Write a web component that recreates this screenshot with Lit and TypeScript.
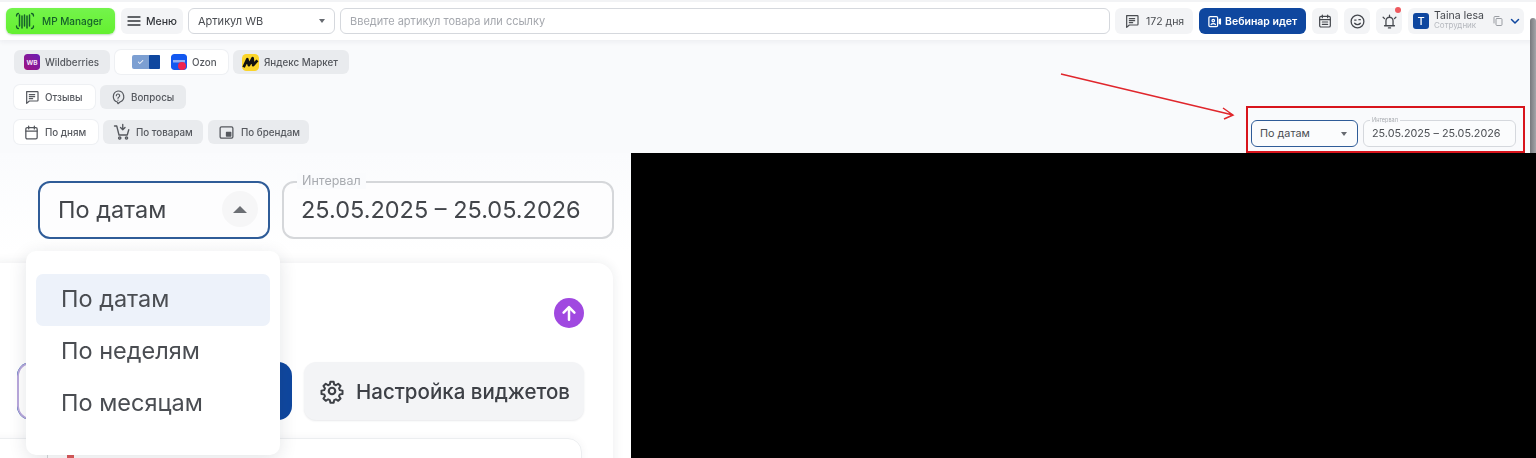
import { LitElement, html, css, svg } from "lit";
import { customElement } from "lit/decorators.js";

const ic = (w: number, body: unknown, sw = 1.8) => html`<svg width=${w} height=${w} viewBox="0 0 24 24" fill="none" stroke="currentColor" stroke-width=${sw} stroke-linecap="round" stroke-linejoin="round">${body}</svg>`;
const chat = svg`<path d="M4 4h16a1 1 0 0 1 1 1v12a1 1 0 0 1-1 1H8l-4 3.5V5a1 1 0 0 1 0-1z"/><path d="M8 8.5h8M8 11.5h8M8 14.5h5"/>`;
const cal = svg`<rect x="4" y="5" width="16" height="16" rx="2"/><path d="M4 10h16M8 3v4M16 3v4"/>`;

@customElement("app-root")
export class AppRoot extends LitElement {
  static styles = css`
    :host { display: block; width: 1536px; height: 458px; overflow: hidden; position: relative; background: #f9fafc; font-family: Inter, "Noto Sans", sans-serif; color: #3d4046; }
    * { box-sizing: border-box; }
    header, .top, .lower, .scroll { filter: blur(0.35px); }
    header { height: 40px; background: #fff; border-top: 2px solid #f2f3f5; box-shadow: 0 2px 5px rgba(30,40,60,.06); padding: 6px 12px 0 6px; display: flex; gap: 5px; position: relative; }
    .hb { height: 26px; border-radius: 6px; display: flex; align-items: center; flex: none; }
    .logo { width: 109px; background: linear-gradient(#74f44c, #64f02f); color: #145f2a; font-size: 10px; font-weight: 500; padding-left: 9px; gap: 7px; margin-right: 1px; box-shadow: 0 1px 2px rgba(40,120,40,.3); }
    .grey { background: #f3f4f6; }
    .menu { width: 62px; padding-left: 5px; gap: 4px; font-size: 10.5px; font-weight: 500; color: #33363b; }
    .sel { width: 147px; background: #fff; border: 1px solid #d5d8dd; padding: 0 9px; justify-content: space-between; font-size: 11px; color: #4a4d52; }
    .caret { width: 0; height: 0; border: 3.5px solid transparent; border-top: 4px solid #666a70; border-bottom: 0; }
    .search { flex: 1; background: #fff; border: 1px solid #d5d8dd; padding-left: 9px; font-size: 11px; color: #a5a8ae; }
    .days { width: 78px; padding-left: 9px; gap: 6px; font-size: 10.5px; color: #4a4d52; margin-right: 1px; }
    .web { width: 107px; background: #0f479f; color: #fff; font-size: 10.5px; font-weight: 600; padding-left: 8px; gap: 3px; margin-right: 1px; }
    .sq { width: 26px; justify-content: center; color: #44474d; margin-right: 1px; position: relative; }
    .dot { position: absolute; width: 6px; height: 6px; border-radius: 50%; background: #ee5a5f; top: -1px; right: 1px; }
    .user { width: 116px; padding-left: 5px; gap: 5px; }
    .ava { width: 16px; height: 16px; border-radius: 3px; background: #0f479f; color: #fff; font-size: 11px; font-weight: 500; display: flex; align-items: center; justify-content: center; flex: none; }
    .uname { display: flex; flex-direction: column; font-size: 10.5px; line-height: 11px; width: 53px; color: #44474d; white-space: nowrap; margin-top: -2px; }
    .uname small { font-size: 8px; line-height: 9px; color: #b5b8be; }
    .scroll { position: absolute; right: 0; top: 18px; width: 6px; height: 135px; background: linear-gradient(90deg, #77797d, #a3a5a9); border-radius: 3px 3px 0 0; }

    .top { height: 113px; display: flex; justify-content: space-between; align-items: flex-end; position: relative; }
    .rows { display: flex; flex-direction: column; gap: 11px; padding: 0 0 9px 14px; }
    .row { display: flex; gap: 5px; height: 24px; }
    .tab { display: flex; align-items: center; height: 24px; border-radius: 6px; background: #e9ebee; font-size: 9.8px; color: #55585e; font-weight: 500; padding-left: 10px; gap: 5px; white-space: nowrap; }
    .tab.on { background: #fff; box-shadow: 0 0 0 1px #eef0f3; }
    .toggle { width: 28px; height: 14px; border-radius: 2px; background: #7c9fd2; display: flex; justify-content: flex-end; color: #fff; font-size: 8px; position: relative; margin-left: 7px; margin-right: 6px; }
    .toggle i { width: 11px; height: 14px; background: #0f479f; border-radius: 1px; }
    .toggle b { position: absolute; left: 5px; top: 1px; font-weight: 400; line-height: 12px; }
    .logoIc { width: 16px; height: 16px; border-radius: 3px; flex: none; }

    .redbox { width: 279px; height: 47px; border: 2px solid #d8141c; margin-right: 11px; padding: 12px 7px 0 3px; display: flex; gap: 5px; }
    .f { height: 27px; border-radius: 6px; display: flex; align-items: center; font-size: 10.8px; color: #4a4d52; position: relative; background: #fbfcfd; }
    .f.a { width: 107px; border: 1px solid #2f5c98; padding: 0 10px 0 8px; justify-content: space-between; }
    .f.b { width: 153px; border: 1px solid #d5d8dd; padding-left: 8px; white-space: nowrap; }
    .f.b em { position: absolute; left: 6px; top: -5px; font-style: normal; font-size: 5.5px; line-height: 8px; background: #f9fafc; padding: 0 2px; color: #a8abb0; }
    .arrow { position: absolute; left: 1055px; top: 30px; }

    .lower { display: grid; grid-template-columns: 631px 1fr; height: 305px; }
    .black { background: #000; }
    .zoom { position: relative; overflow: hidden; background: linear-gradient(#fafbfd, #fff 100px); }
    .ctrls { display: flex; gap: 12px; padding: 28px 0 0 38px; }
    .F { height: 58px; border-radius: 12px; display: flex; align-items: center; font-size: 23.5px; color: #43464b; background: #fdfdfe; position: relative; white-space: nowrap; padding-bottom: 2px; }
    .F.a { width: 232px; border: 2px solid #2f5c98; padding-left: 18px; padding-right: 10px; justify-content: space-between; }
    .F.b { width: 332px; border: 2px solid #d5d7da; padding-left: 17px; }
    .F.b em { position: absolute; left: 13px; top: -10px; font-style: normal; font-size: 12.5px; line-height: 16px; background: #fafbfd; padding: 0 5px; color: #a8abb0; }
    .up { width: 36px; height: 36px; border-radius: 50%; background: #f6f6f7; display: flex; align-items: center; justify-content: center; }
    .up::before { content: ""; border: 7px solid transparent; border-bottom: 7px solid #6c6f74; border-top: 0; }
    .card { margin: 24px 0 0 -14px; width: 627px; height: 260px; background: #fff; border-radius: 16px; box-shadow: 0 0 12px rgba(30,40,60,.09); padding: 35px 29px 0 31px; }
    .pur { display: flex; justify-content: flex-end; }
    .pc { width: 30px; height: 30px; border-radius: 50%; background: #a049e0; color: #fff; display: flex; align-items: center; justify-content: center; }
    .btns { display: flex; gap: 12px; margin-top: 34px; }
    .b1 { width: 275px; height: 58px; border-radius: 14px; background: #0f479f; overflow: hidden; }
    .b1 i { display: block; width: 215px; height: 58px; background: #fff; border: 2px solid #b9a8dc; border-radius: 14px 0 0 14px; }
    .b2 { width: 280px; height: 58px; border-radius: 12px; background: #f3f4f6; display: flex; align-items: center; gap: 11px; padding-left: 15px; font-size: 20.5px; font-weight: 500; color: #3d4046; white-space: nowrap; box-shadow: 0 1px 2px rgba(30,40,60,.1); }
    .inner { margin: 18px 0 0 -31px; width: 596px; height: 60px; border-radius: 14px; border: 1px solid #eceef0; position: relative; box-shadow: 0 0 8px rgba(30,40,60,.05); }
    .mark { position: absolute; left: 80px; top: 13px; width: 7px; height: 14px; background: #dc5a5a; }
    .vline { position: absolute; left: 60px; top: 13px; width: 1px; height: 14px; background: #d5d7da; }
    .dd { position: absolute; left: 26px; top: 98px; width: 254px; height: 204px; background: #fff; border-radius: 10px; padding: 23px 10px 0; box-shadow: 0 4px 18px rgba(30,40,60,.12); }
    .it { height: 52px; border-radius: 7px; display: flex; align-items: center; padding: 0 0 3px 25px; font-size: 23.5px; color: #4a4d52; }
    .it.sel2 { background: #edf2fa; }
  `;

  render() {
    return html`
      <header>
        <div class="hb logo">
          <svg width="20" height="18" viewBox="0 0 20 18" fill="none" stroke="#145f2a" stroke-width="1.300" stroke-linecap="round"><path d="M3.500 1.500C2 1.500 1.500 2.500 1.500 4M16.500 1.500c1.500 0 2 1 2 2.500M3.500 16.500C2 16.500 1.500 15.500 1.500 14M16.500 16.500c1.500 0 2-1 2-2.500"/><path d="M4.500 3v11M7 4v12M9.500 3v11M12 4v12M14.500 3v11" stroke-width="1.500"/></svg>
          MP Manager
        </div>
        <div class="hb grey menu">${ic(16, svg`<path d="M3 6h18M3 12h18M3 18h18"/>`, 2)}Меню</div>
        <div class="hb sel">Артикул WB<span class="caret"></span></div>
        <div class="hb search">Введите артикул товара или ссылку</div>
        <div class="hb grey days">${ic(16, chat)}172 дня</div>
        <div class="hb web">
          ${ic(15, svg`<rect x="3" y="4" width="14" height="16" rx="2"/><circle cx="10" cy="10.5" r="2"/><path d="M6.5 17c.6-2 6.400-2 7 0M19.500 9l2-1v8l-2-1z"/>`, 2)}Вебинар идет
        </div>
        <div class="hb grey sq">${ic(16, svg`${cal}<path d="M8 13.500h8M8 17h8"/>`)}</div>
        <div class="hb grey sq">${ic(17, svg`<circle cx="12" cy="12" r="9"/><path d="M8 14.500c2 2.500 6 2.500 8 0M8 10h2M14 9.500h2"/>`)}</div>
        <div class="hb grey sq">${ic(17, svg`<path d="M7 18v-7a5 5 0 0 1 10 0v7M5 18h14M10.500 21h3M12 3v2M3 6l2 2M21 6l-2 2"/>`)}<span class="dot"></span></div>
        <div class="hb grey user">
          <span class="ava">T</span>
          <span class="uname">Taina Iesa<small>Сотрудник</small></span>
          <span style="color:#9a9da3;display:flex">${ic(12, svg`<rect x="8" y="7" width="12" height="14" rx="2"/><path d="M4 16V5a2 2 0 0 1 2-2h8"/>`, 2)}</span>
          <span style="color:#0f479f;display:flex">${ic(12, svg`<path d="M5 9l7 7 7-7"/>`, 3)}</span>
        </div>
      </header>
      <div class="scroll"></div>

      <section class="top">
        <div class="rows">
          <div class="row">
            <div class="tab" style="width:96px"><svg class="logoIc" viewBox="0 0 16 16"><defs><linearGradient id="wb" x1="0" y1="1" x2="1" y2="0"><stop offset="0" stop-color="#a1127f"/><stop offset="1" stop-color="#6a1fb5"/></linearGradient></defs><rect width="16" height="16" rx="3" fill="url(#wb)"/><text x="8" y="10.500" font-size="6.500" font-weight="700" fill="#f3e3f5" text-anchor="middle" font-family="Inter">WB</text></svg>Wildberries</div>
            <div class="tab on" style="width:113px"><span class="toggle"><b>✓</b><i></i></span><svg class="logoIc" viewBox="0 0 16 16"><rect width="16" height="16" rx="3" fill="#1358f0"/><rect x="2" y="6" width="12" height="2.500" fill="#8fb0f5"/><circle cx="11" cy="12" r="4" fill="#f0244f"/></svg>Ozon</div>
            <div class="tab" style="width:116px;padding-left:9px"><svg class="logoIc" style="width:17px;height:17px" viewBox="0 0 16 16"><rect width="16" height="16" rx="4" fill="#fbd52a"/><path d="M1.500 12.500L5 5l1.500 5.500L10 4l.5 6.500L14.500 6" fill="none" stroke="#111" stroke-width="2.600" stroke-linejoin="round"/></svg>Яндекс Маркет</div>
          </div>
          <div class="row">
            <div class="tab on" style="width:81px">${ic(16, chat)}Отзывы</div>
            <div class="tab" style="width:86px">${ic(16, svg`<path d="M12 3a8.500 8.500 0 0 1 3 16.500L12 22l-1-2.500A8.500 8.500 0 0 1 12 3z"/><path d="M9.500 10a2.500 2.500 0 1 1 3.500 2.300c-.7.400-1 .8-1 1.700M12 16.500v.2"/>`)}Вопросы</div>
          </div>
          <div class="row">
            <div class="tab on" style="width:84px;padding-left:9px">${ic(17, cal)}По дням</div>
            <div class="tab" style="width:100px">${ic(18, svg`<path d="M2 4h3l3 12h11l2-7M13 2v7M10 6l3 3 3-3"/><circle cx="9" cy="20" r="1.500"/><circle cx="18" cy="20" r="1.500"/>`)}По товарам</div>
            <div class="tab" style="width:101px;gap:6px">${ic(17, svg`<rect x="3" y="4" width="18" height="16" rx="2"/><rect x="12" y="12" width="6" height="5" fill="currentColor"/>`)}По брендам</div>
          </div>
        </div>
        <svg class="arrow" width="190" height="50" viewBox="0 0 190 50" fill="none" stroke="#e0262c" stroke-width="1.500"><path d="M6 4l172 41M168 38l10 7-9 4"/></svg>
        <div class="redbox">
          <div class="f a">По датам<span class="caret"></span></div>
          <div class="f b"><em>Интервал</em>25.05.2025 – 25.05.2026</div>
        </div>
      </section>

      <section class="lower">
        <div class="zoom">
          <div class="ctrls">
            <div class="F a">По датам<span class="up"></span></div>
            <div class="F b"><em>Интервал</em>25.05.2025 – 25.05.2026</div>
          </div>
          <div class="card">
            <div class="pur"><span class="pc">${ic(20, svg`<path d="M12 20V5M5.500 11.500L12 5l6.500 6.500"/>`, 3)}</span></div>
            <div class="btns">
              <div class="b1"><i></i></div>
              <div class="b2">${ic(26, svg`<circle cx="12" cy="12" r="3"/><path d="M10.300 2.500h3.400l.5 2.800 1.800.8 2.400-1.600 2.400 2.400-1.600 2.400.8 1.800 2.800.5v3.400l-2.800.5-.8 1.800 1.600 2.400-2.400 2.400-2.400-1.600-1.800.8-.5 2.800h-3.400l-.5-2.800-1.800-.8-2.400 1.600-2.400-2.400 1.600-2.400-.8-1.800-2.800-.5v-3.400l2.800-.5.8-1.800-1.600-2.400 2.400-2.400 2.400 1.600 1.800-.8z" transform="translate(1.200 1.200) scale(.9)"/>`, 2)}Настройка виджетов</div>
            </div>
            <div class="inner"><span class="vline"></span><span class="mark"></span></div>
          </div>
          <div class="dd">
            <div class="it sel2">По датам</div>
            <div class="it">По неделям</div>
            <div class="it">По месяцам</div>
          </div>
        </div>
        <div class="black"></div>
      </section>
    `;
  }
}
